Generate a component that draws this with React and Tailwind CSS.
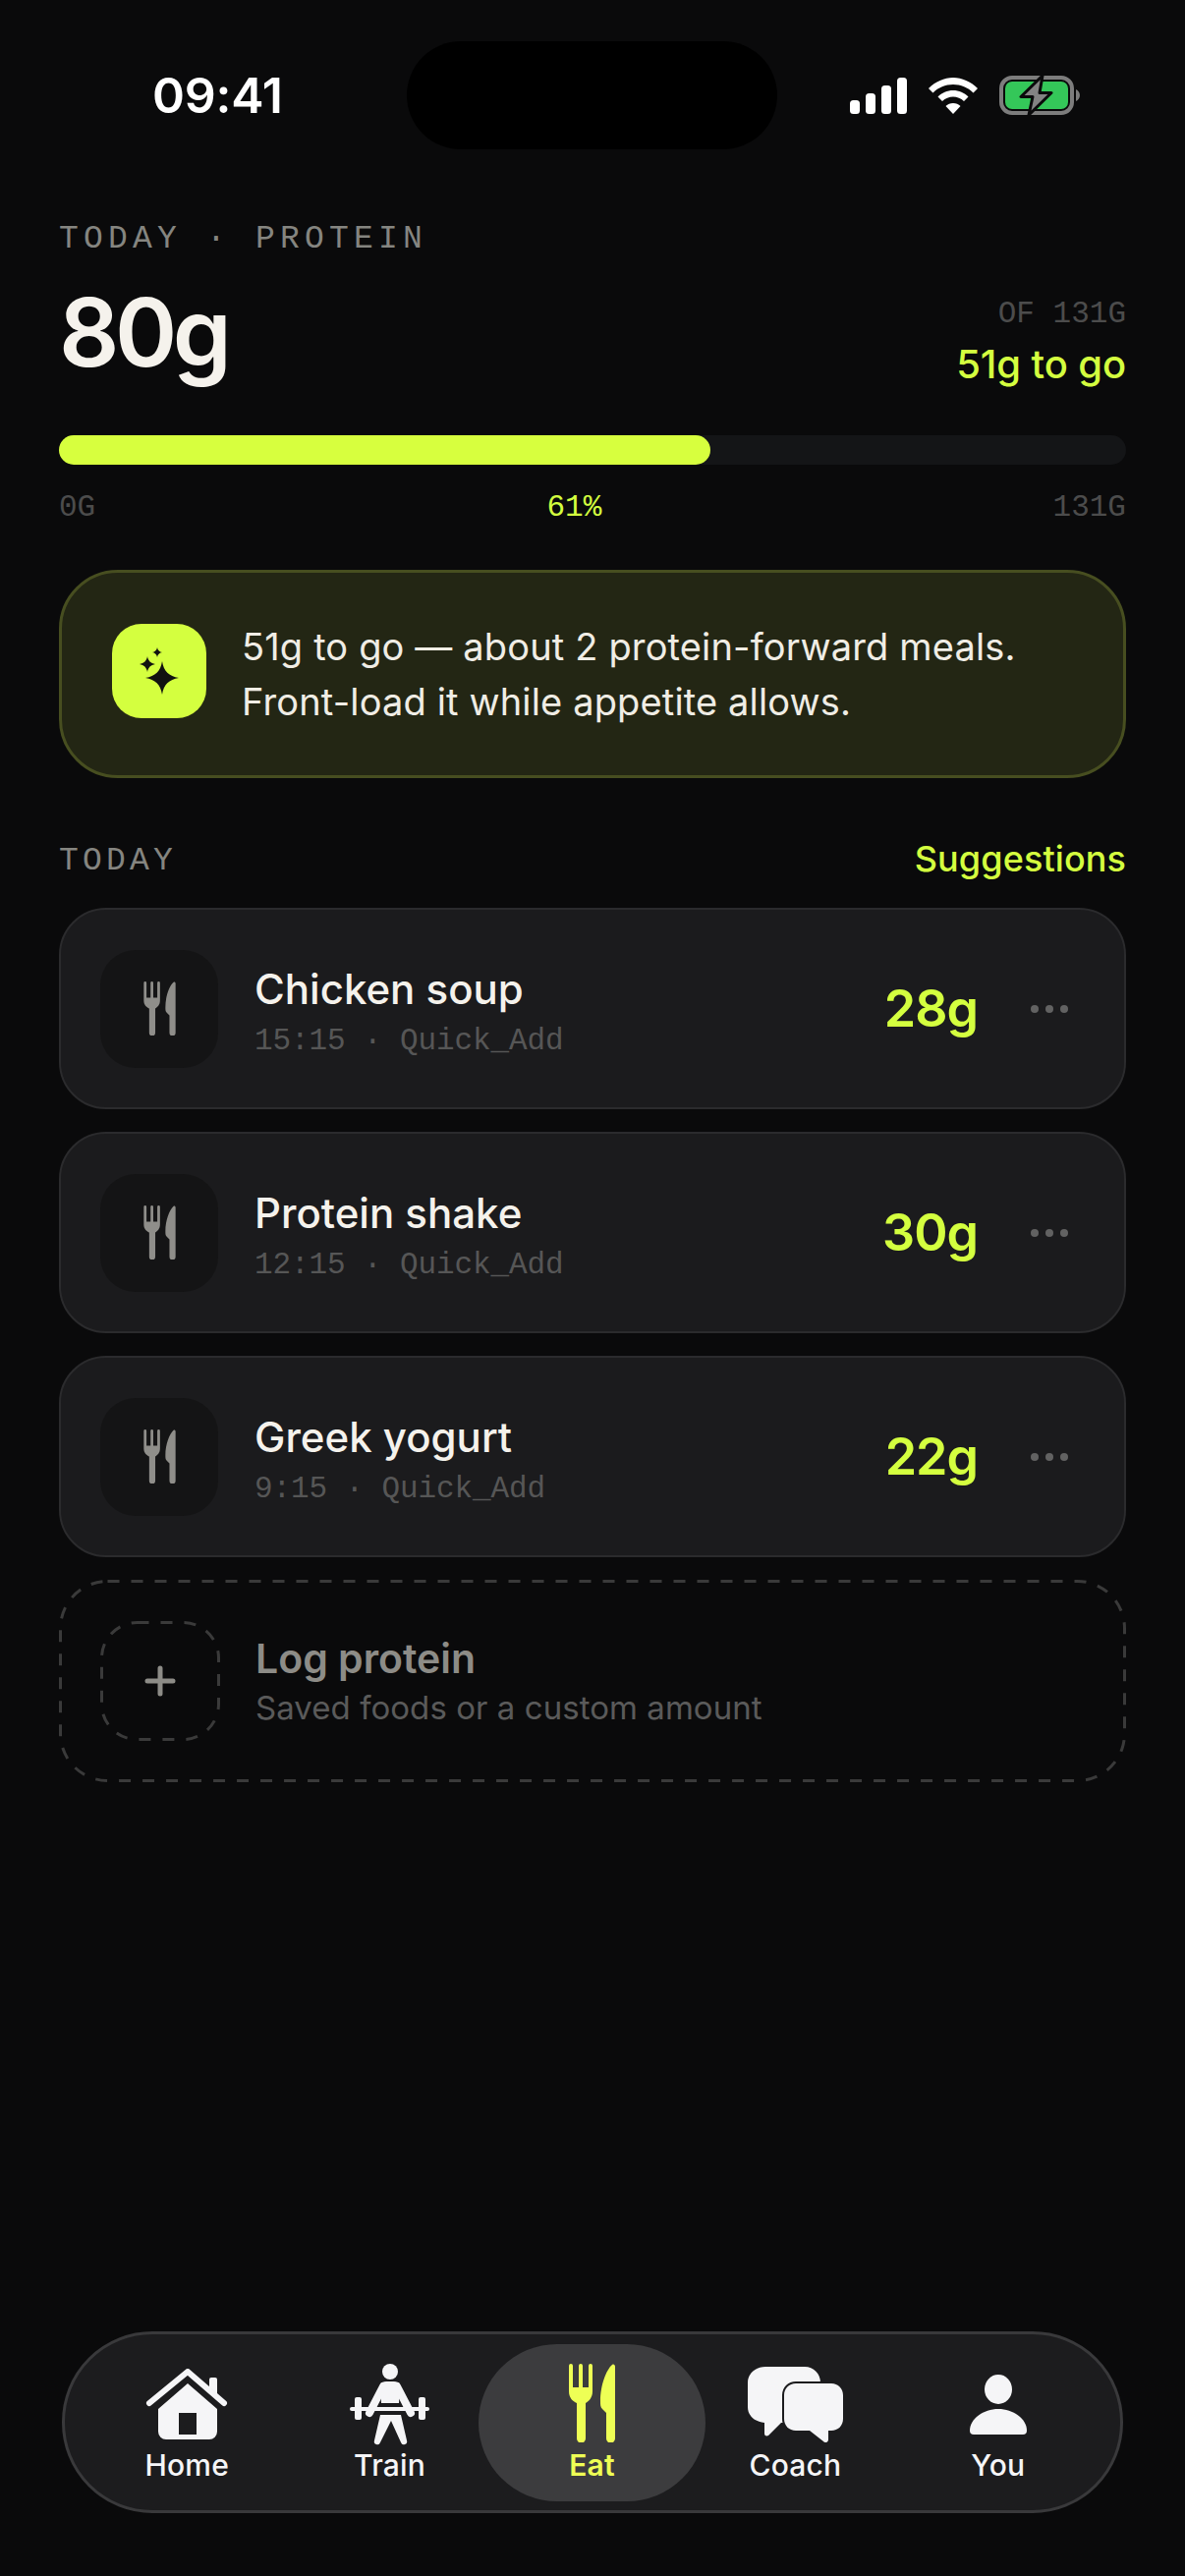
const MONO = "font-['Liberation_Mono',monospace]";

// ─── Icons ────────────────────────────────────────────────────────────────────

function CutleryIcon({ className }) {
    return (
        <svg className={className} viewBox="0 0 47 80" fill="currentColor">
            <path d="M0 2A2 2 0 0 1 4 2V24H10V2A2 2 0 0 1 14 2V24H20V2A2 2 0 0 1 24 2V28C24 35 20 38 17 40V76A4.5 4.5 0 0 1 8 76V40C4 38 0 35 0 28Z" />
            <path d="M47 3V76A4.5 4.5 0 0 1 38 76V50L34 46C32 44 32 42 32 38C32 22 38 6 44 1C45.5 0 47 1 47 3Z" />
        </svg>
    );
}

function SparkleIcon({ className }) {
    return (
        <svg className={className} viewBox="0 0 96 96" fill="#111210">
            <path d="M51 38C52.500 48 58 53.500 68 55C58 56.500 52.500 62 51 72C49.500 62 44 56.500 34 55C44 53.500 49.500 48 51 38Z" />
            <path d="M36 33C36.800 37.600 39.400 40.200 44 41C39.400 41.800 36.800 44.400 36 49C35.200 44.400 32.600 41.800 28 41C32.600 40.200 35.200 37.600 36 33Z" />
            <path d="M46 24C46.500 26.800 48.200 28.500 51 29C48.200 29.500 46.500 31.200 46 34C45.500 31.200 43.800 29.500 41 29C43.800 28.500 45.500 26.800 46 24Z" />
        </svg>
    );
}

function SignalIcon() {
    return (
        <svg className="w-[58px] h-[37px]" viewBox="0 0 58 37" fill="#fff">
            <rect x="0" y="23" width="10" height="14" rx="3.5" />
            <rect x="16" y="16" width="10" height="21" rx="3.5" />
            <rect x="32" y="8" width="10" height="29" rx="3.5" />
            <rect x="48" y="0" width="10" height="37" rx="3.5" />
        </svg>
    );
}

function WifiIcon() {
    return (
        <svg className="w-[50px] h-[37px]" viewBox="0 0 50 37" fill="#fff">
            <path d="M25 0C34 0 43 4 50 11L45.5 15.5C40 10 33 7 25 7C17 7 10 10 4.500 15.500L0 11C7 4 16 0 25 0Z" />
            <path d="M25 13C31 13 36.500 15.500 40.500 19.500L36 24C33 21.200 29 19.500 25 19.500C21 19.500 17 21.200 14 24L9.500 19.500C13.500 15.500 19 13 25 13Z" />
            <path d="M25 26C28 26 30.500 27 32.500 29L25 37L17.500 29C19.500 27 22 26 25 26Z" />
        </svg>
    );
}

function BatteryIcon() {
    return (
        <svg className="w-[82px] h-[42px]" viewBox="0 0 82 42" fill="none">
            <rect x="2" y="3" width="72" height="36" rx="11" stroke="#7d7d7d" strokeWidth="4" />
            <rect x="6" y="7" width="64" height="28" rx="7" fill="#34c759" />
            <path d="M78 15C80.500 16 82 18.500 82 21C82 23.500 80.500 26 78 27Z" fill="#7d7d7d" />
            <path d="M44 1L22 22.500H34L30 41L53 18.500H41Z" fill="#838383" stroke="#0a0a0b" strokeWidth="3" strokeLinejoin="round" />
        </svg>
    );
}

function HomeIcon() {
    return (
        <svg className="w-[84px] h-[74px]" viewBox="8 8 84 74" fill="currentColor">
            <path d="M73 22V19A2 2 0 0 1 75 17H79A2 2 0 0 1 81 19V34L73 27Z" />
            <path d="M12 43L51 11L88 43" fill="none" stroke="currentColor" strokeWidth="6" strokeLinecap="round" strokeLinejoin="round" />
            <path fillRule="evenodd" d="M51 23L81 49V72A8 8 0 0 1 73 80H29A8 8 0 0 1 21 72V49ZM42 53V75H60V53Z" />
        </svg>
    );
}

function TrainIcon() {
    return (
        <svg className="w-[82px] h-[83px]" viewBox="10 7 82 83" fill="currentColor" stroke="none">
            <circle cx="51" cy="15" r="8" />
            <path d="M47 25H55C58 25 60 26 61 29L60 47H42L41 29C42 26 44 25 47 25Z" />
            <path d="M44 30L30 57M58 30L72 57" stroke="currentColor" strokeWidth="8" strokeLinecap="round" fill="none" />
            <rect x="10" y="51" width="81" height="4" rx="2" />
            <rect x="15" y="41" width="7" height="23" rx="2" />
            <rect x="80" y="41" width="7" height="23" rx="2" />
            <path d="M41 59H62L68 85A3 3 0 0 1 62 87L52 65L41 87A3 3 0 0 1 35 85Z" />
        </svg>
    );
}

function CoachIcon() {
    return (
        <svg className="w-[97px] h-[77px]" viewBox="0 0 97 77" fill="currentColor">
            <path d="M18 0H58C67 0 74 7 74 16V41C74 50 67 57 58 57H34L21 70C19.500 71 17 70.500 17 68V57C7 56 0 50 0 41V16C0 7 8 0 18 0Z" />
            <path d="M49 17H85C92 17 97 22 97 29V53C97 60 92 65 85 65H82V74C82 77 79 78 77 76L63 65H49C42 65 37 60 37 53V29C37 22 42 17 49 17Z" stroke="#1c1c1e" strokeWidth="4" paintOrder="stroke" />
        </svg>
    );
}

function YouIcon() {
    return (
        <svg className="w-[58px] h-[61px]" viewBox="0 0 58 61" fill="currentColor">
            <ellipse cx="29" cy="15" rx="14" ry="15" />
            <path d="M0 57C0 45 14 35 29 35C44 35 58 45 58 57A4 4 0 0 1 54 61H4A4 4 0 0 1 0 57Z" />
        </svg>
    );
}

// dashed outline with long dashes, a CSS dashed border can't get this spacing
function DashedOutline({ width, height, radius }) {
    return (
        <svg className="absolute inset-0" width={width} height={height} fill="none">
            <rect x="1.5" y="1.5" width={width - 3} height={height - 3} rx={radius} stroke="#3a3a3a" strokeWidth="3" strokeDasharray="12 12" />
        </svg>
    );
}

// ─── Data ─────────────────────────────────────────────────────────────────────

const MEALS = [
    { name: 'Chicken soup', time: '15:15', grams: '28g' },
    { name: 'Protein shake', time: '12:15', grams: '30g' },
    { name: 'Greek yogurt', time: '9:15', grams: '22g' },
];

const NAV = [
    { label: 'Home', Icon: HomeIcon },
    { label: 'Train', Icon: TrainIcon },
    { label: 'Eat', active: true },
    { label: 'Coach', Icon: CoachIcon },
    { label: 'You', Icon: YouIcon },
];

// ─── Sections ─────────────────────────────────────────────────────────────────

function StatusBar() {
    return (
        <div className="flex items-center h-[110px] mt-[42px] shrink-0">
            <div className="w-[414px] pl-[155px] text-[50px] leading-none font-semibold tracking-[-0.2px] text-white">09:41</div>
            <div className="w-[377px] h-[110px] rounded-[55px] bg-black" />
            <div className="flex items-center pl-[74px] gap-[22px]">
                <SignalIcon />
                <WifiIcon />
                <BatteryIcon />
            </div>
        </div>
    );
}

function MealRow({ name, time, grams }) {
    return (
        <div className="flex items-center h-[205px] rounded-[48px] border-2 border-[#2b2b2d] bg-[#1b1b1d] pl-[40px] pr-[57px]">
            <div className="flex items-center justify-center w-[120px] h-[120px] rounded-[36px] bg-[#141415] shrink-0">
                <CutleryIcon className="w-[33px] h-[55px] text-[#8f8e8a]" />
            </div>
            <div className="ml-[37px] flex-1 pt-[6px]">
                <div className="text-[42px] leading-[52px] font-medium text-[#f5f2ec]">{name}</div>
                <div className={`${MONO} mt-[9px] text-[31px] leading-[36px] tracking-[-0.1px] text-[#565656]`}>{time} · Quick_Add</div>
            </div>
            <div className="text-[52px] leading-none font-semibold tracking-[-1px] text-[#d4ff3f]">{grams}</div>
            <div className="flex items-center gap-[7px] ml-[54px]">
                <span className="w-[8px] h-[8px] rounded-full bg-[#626262]" />
                <span className="w-[8px] h-[8px] rounded-full bg-[#626262]" />
                <span className="w-[8px] h-[8px] rounded-full bg-[#626262]" />
            </div>
        </div>
    );
}

function TabBar() {
    return (
        <div className="mt-auto mb-[64px] mx-[63px] h-[185px] rounded-[92px] border-[3px] border-[#39393b] bg-[#1c1c1e] pl-[21px] pr-[21px] grid grid-cols-5 items-center">
            {NAV.map(({ label, Icon, active }) => (
                <div
                    key={label}
                    className={`flex flex-col items-center justify-center h-[160px] ${active ? '-ml-[13px] -mr-[12px] rounded-[80px] bg-[#3c3c3e] text-[#eeff55]' : 'text-[#f5f5f7]'}`}
                >
                    <div className="flex items-center justify-center h-[86px]">
                        {active ? <CutleryIcon className="w-[47px] h-[80px] mb-[4px]" /> : <Icon />}
                    </div>
                    <div className={`text-[30px] leading-[36px] tracking-[0.2px] ${active ? 'font-semibold' : 'font-medium'}`}>{label}</div>
                </div>
            ))}
        </div>
    );
}

export default function App() {
    return (
        <div className="flex flex-col w-[1206px] h-[2622px] bg-[#0a0a0b] font-['Inter',sans-serif] overflow-hidden">
            <StatusBar />

            <div className="px-[60px]">
                {/* Protein summary */}
                <div className={`${MONO} mt-[72px] text-[33px] leading-[40px] tracking-[5.2px] text-[#858580]`}>TODAY · PROTEIN</div>
                <div className="flex items-end justify-between mt-[16px]">
                    <div className="text-[96px] leading-[116px] font-semibold tracking-[-4.5px] text-[#f5f2ec]">80g</div>
                    <div className="flex flex-col items-end pb-[2px]">
                        <div className={`${MONO} text-[31px] leading-[36px] text-[#4c4c4c]`}>OF 131G</div>
                        <div className="text-[40px] leading-[46px] mt-[10px] font-medium tracking-[-0.1px] text-[#d4ff3f]">51g to go</div>
                    </div>
                </div>

                <div className="mt-[47px] h-[30px] rounded-[15px] bg-[#141517]">
                    <div className="h-full w-[663px] rounded-[15px] bg-[#d7ff3e]" />
                </div>
                <div className={`${MONO} flex justify-between mt-[26px] text-[31px] leading-[36px] text-[#4c4c4c]`}>
                    <span>0G</span>
                    <span className="text-[#d4ff3f]">61%</span>
                    <span>131G</span>
                </div>

                {/* Coach callout */}
                <div className="flex items-center h-[212px] mt-[45px] rounded-[60px] border-[3px] border-[#474e20] bg-[#232614] pl-[51px]">
                    <div className="flex items-center justify-center w-[96px] h-[96px] mb-[6px] rounded-[30px] bg-[#d4ff3f] shrink-0">
                        <SparkleIcon className="w-[96px] h-[96px]" />
                    </div>
                    <div className="ml-[36px] text-[38px] leading-[56px] tracking-[0.15px] text-[#f0ede5]">
                        51g to go — about 2 protein-forward meals.<br />Front-load it while appetite allows.
                    </div>
                </div>

                {/* Meals */}
                <div className="flex items-center justify-between h-[44px] mt-[61px]">
                    <span className={`${MONO} pt-[3px] text-[33px] tracking-[4.2px] text-[#858580]`}>TODAY</span>
                    <span className="pb-[3px] text-[36px] font-medium tracking-[0.1px] text-[#d4ff3f]">Suggestions</span>
                </div>
                <div className="flex flex-col gap-[23px] mt-[27px]">
                    {MEALS.map((meal) => (
                        <MealRow key={meal.name} {...meal} />
                    ))}
                    <div className="relative flex items-center h-[206px] pl-[42px]">
                        <DashedOutline width={1086} height={206} radius={48} />
                        <div className="relative flex items-center justify-center w-[122px] h-[122px] shrink-0">
                            <DashedOutline width={122} height={122} radius={36} />
                            <svg className="w-[32px] h-[32px]" viewBox="0 0 32 32" stroke="#8d8c87" strokeWidth="5" strokeLinecap="round">
                                <path d="M16 3V29M3 16H29" />
                            </svg>
                        </div>
                        <div className="ml-[36px]">
                            <div className="text-[41px] leading-[52px] font-semibold text-[#8d8c87]">Log protein</div>
                            <div className="mt-[2px] text-[33px] leading-[44px] tracking-[0.05px] text-[#5a5a5a]">Saved foods or a custom amount</div>
                        </div>
                    </div>
                </div>
            </div>

            <TabBar />
        </div>
    );
}
